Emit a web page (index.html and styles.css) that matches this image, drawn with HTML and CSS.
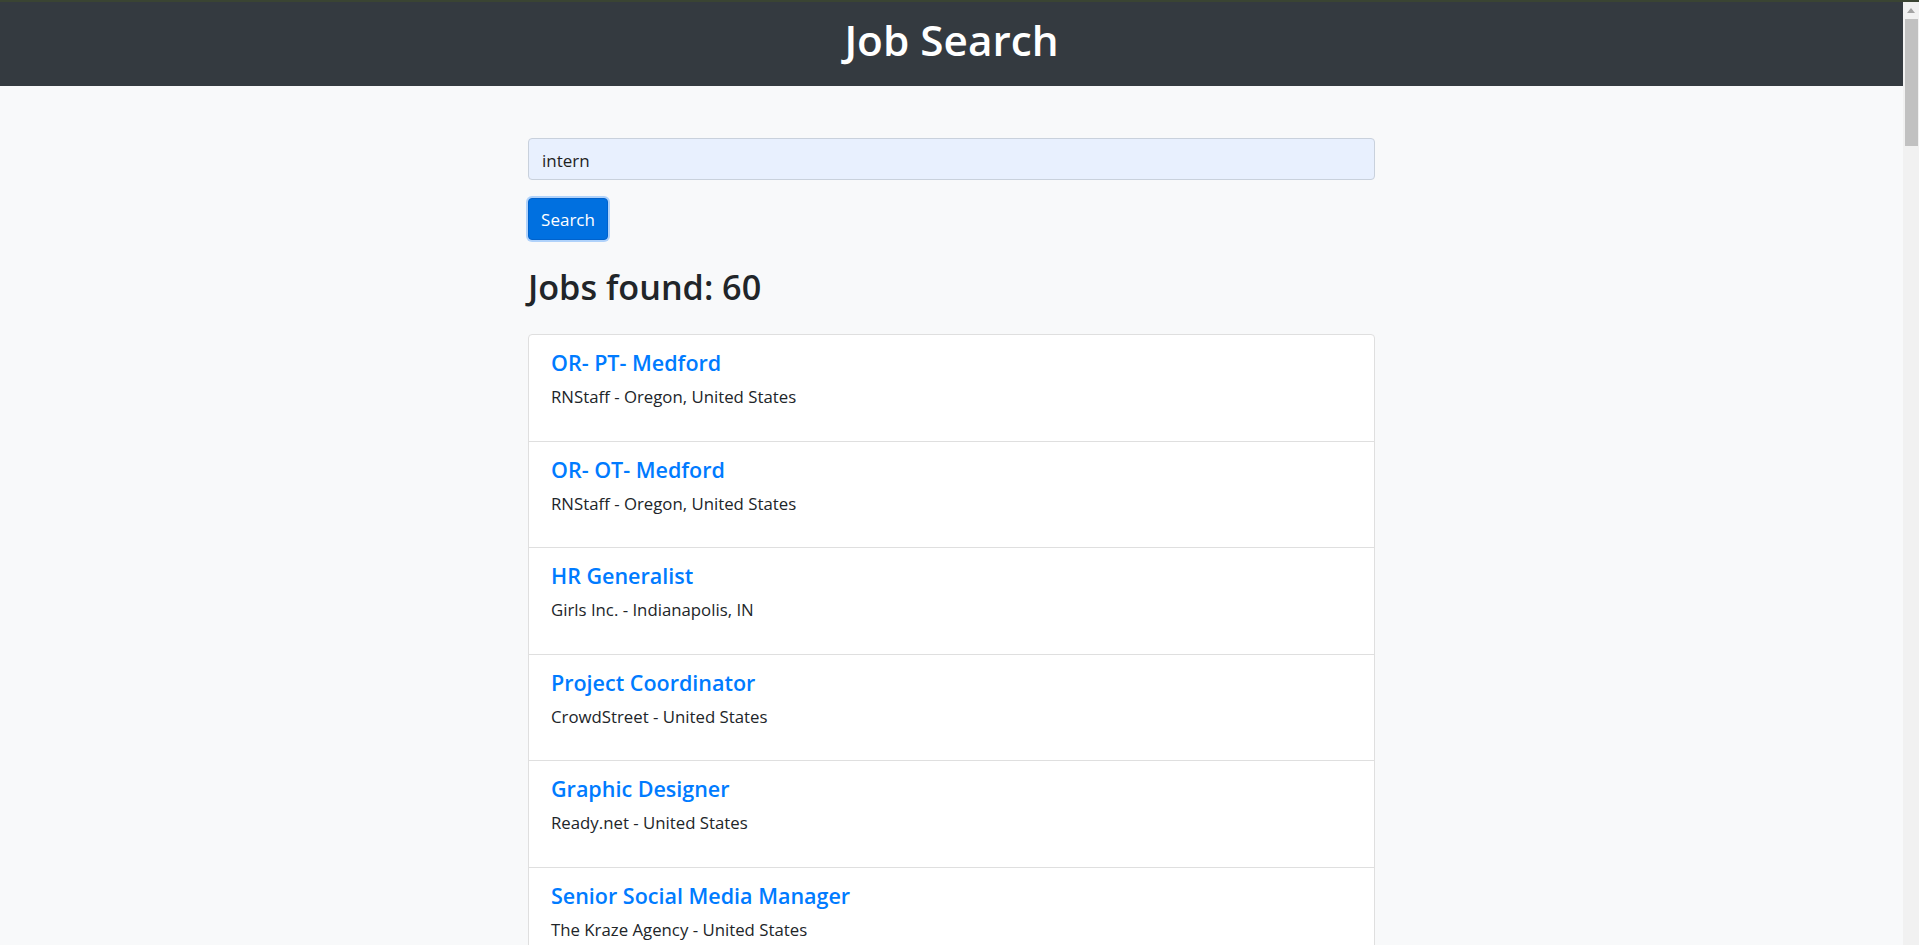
FILE: index.html
```html
<!DOCTYPE html>
<html lang="en">
<head>
<meta charset="utf-8">
<title>Job Search</title>
<link rel="stylesheet" href="styles.css">
</head>
<body>
<div class="topline"></div>
<div class="window">
  <div class="main">
    <header class="navbar">
      <h1 class="brand">Job Search</h1>
    </header>
    <div class="container">
      <form class="search-form">
        <input class="form-control" type="text" value="intern">
        <button class="btn-primary" type="button">Search</button>
      </form>
      <h2 class="count">Jobs found: 60</h2>
      <ul class="job-list">
        <li class="job">
          <a class="job-title" href="#">OR- PT- Medford</a>
          <p class="job-meta">RNStaff - Oregon, United States</p>
        </li>
        <li class="job">
          <a class="job-title" href="#">OR- OT- Medford</a>
          <p class="job-meta">RNStaff - Oregon, United States</p>
        </li>
        <li class="job">
          <a class="job-title" href="#">HR Generalist</a>
          <p class="job-meta">Girls Inc. - Indianapolis, IN</p>
        </li>
        <li class="job">
          <a class="job-title" href="#">Project Coordinator</a>
          <p class="job-meta">CrowdStreet - United States</p>
        </li>
        <li class="job">
          <a class="job-title" href="#">Graphic Designer</a>
          <p class="job-meta">Ready.net - United States</p>
        </li>
        <li class="job">
          <a class="job-title" href="#">Senior Social Media Manager</a>
          <p class="job-meta">The Kraze Agency - United States</p>
        </li>
      </ul>
    </div>
  </div>
  <aside class="scrollbar">
    <div class="scroll-up">
      <svg width="8" height="5" viewBox="0 0 8 5"><path d="M0 5 L4 0 L8 5 Z" fill="#a3a3a3"/></svg>
    </div>
    <div class="scroll-thumb"></div>
  </aside>
</div>
</body>
</html>
```
FILE: styles.css
```css
* { box-sizing: border-box; }
html, body { margin: 0; padding: 0; height: 100%; overflow: hidden; }
body {
  background: #f8f9fa;
  font-family: "Open Sans", "Noto Sans", sans-serif;
  color: #212529;
}
.topline { height: 2px; background: #3a4433; }
.window {
  display: flex;
  height: calc(100vh - 2px);
}
.main {
  flex: 1;
  min-width: 0;
  overflow: hidden;
}
.navbar {
  background: #343a40;
  height: 84px;
  padding: 12px 0 20px;
  display: flex;
  justify-content: center;
}
.brand {
  margin: 0;
  color: #fff;
  font-size: 42.3px;
  line-height: 52px;
  font-weight: 600;
}
.container {
  width: 847px;
  margin: 0 auto;
  padding-top: 52px;
}
.search-form {
  display: flex;
  flex-direction: column;
  align-items: flex-start;
  gap: 18px;
}
.form-control {
  width: 100%;
  height: 42px;
  border: 1px solid #c9d1dc;
  border-radius: 4px;
  background: #e8f0fe;
  padding: 2px 13px 0;
  font-family: inherit;
  font-size: 17px;
  color: #1f1f1f;
  outline: none;
}
.btn-primary {
  height: 42px;
  width: 80px;
  padding: 0;
  border: 1px solid #0062cc;
  border-radius: 4px;
  background: #0070e0;
  color: #fff;
  font-family: inherit;
  font-size: 17px;
  box-shadow: 0 0 0 2px #b0d2fa;
}
.count {
  margin: 26px 0 26px;
  font-size: 34.2px;
  line-height: 42px;
  font-weight: 600;
  color: #212529;
}
.job-list {
  list-style: none;
  margin: 0;
  padding: 0;
  background: #fff;
  border: 1px solid #dfdfdf;
  border-radius: 4px;
}
.job {
  height: 106.5px;
  padding: 15px 22px 0;
  border-bottom: 1px solid #dfdfdf;
}
.job-title {
  display: block;
  color: #007bff;
  text-decoration: none;
  font-size: 21.5px;
  line-height: 26px;
  font-weight: 600;
}
.job-meta {
  margin: 8px 0 0;
  font-size: 16.8px;
  line-height: 26px;
}
.scrollbar {
  width: 16px;
  flex: none;
  background: #f1f1f1;
  display: flex;
  flex-direction: column;
  align-items: center;
}
.scroll-up {
  height: 17px;
  width: 16px;
  display: flex;
  align-items: center;
  justify-content: center;
}
.scroll-thumb {
  width: 13px;
  margin-left: 1px;
  height: 127px;
  background: #c1c1c1;
}
```
